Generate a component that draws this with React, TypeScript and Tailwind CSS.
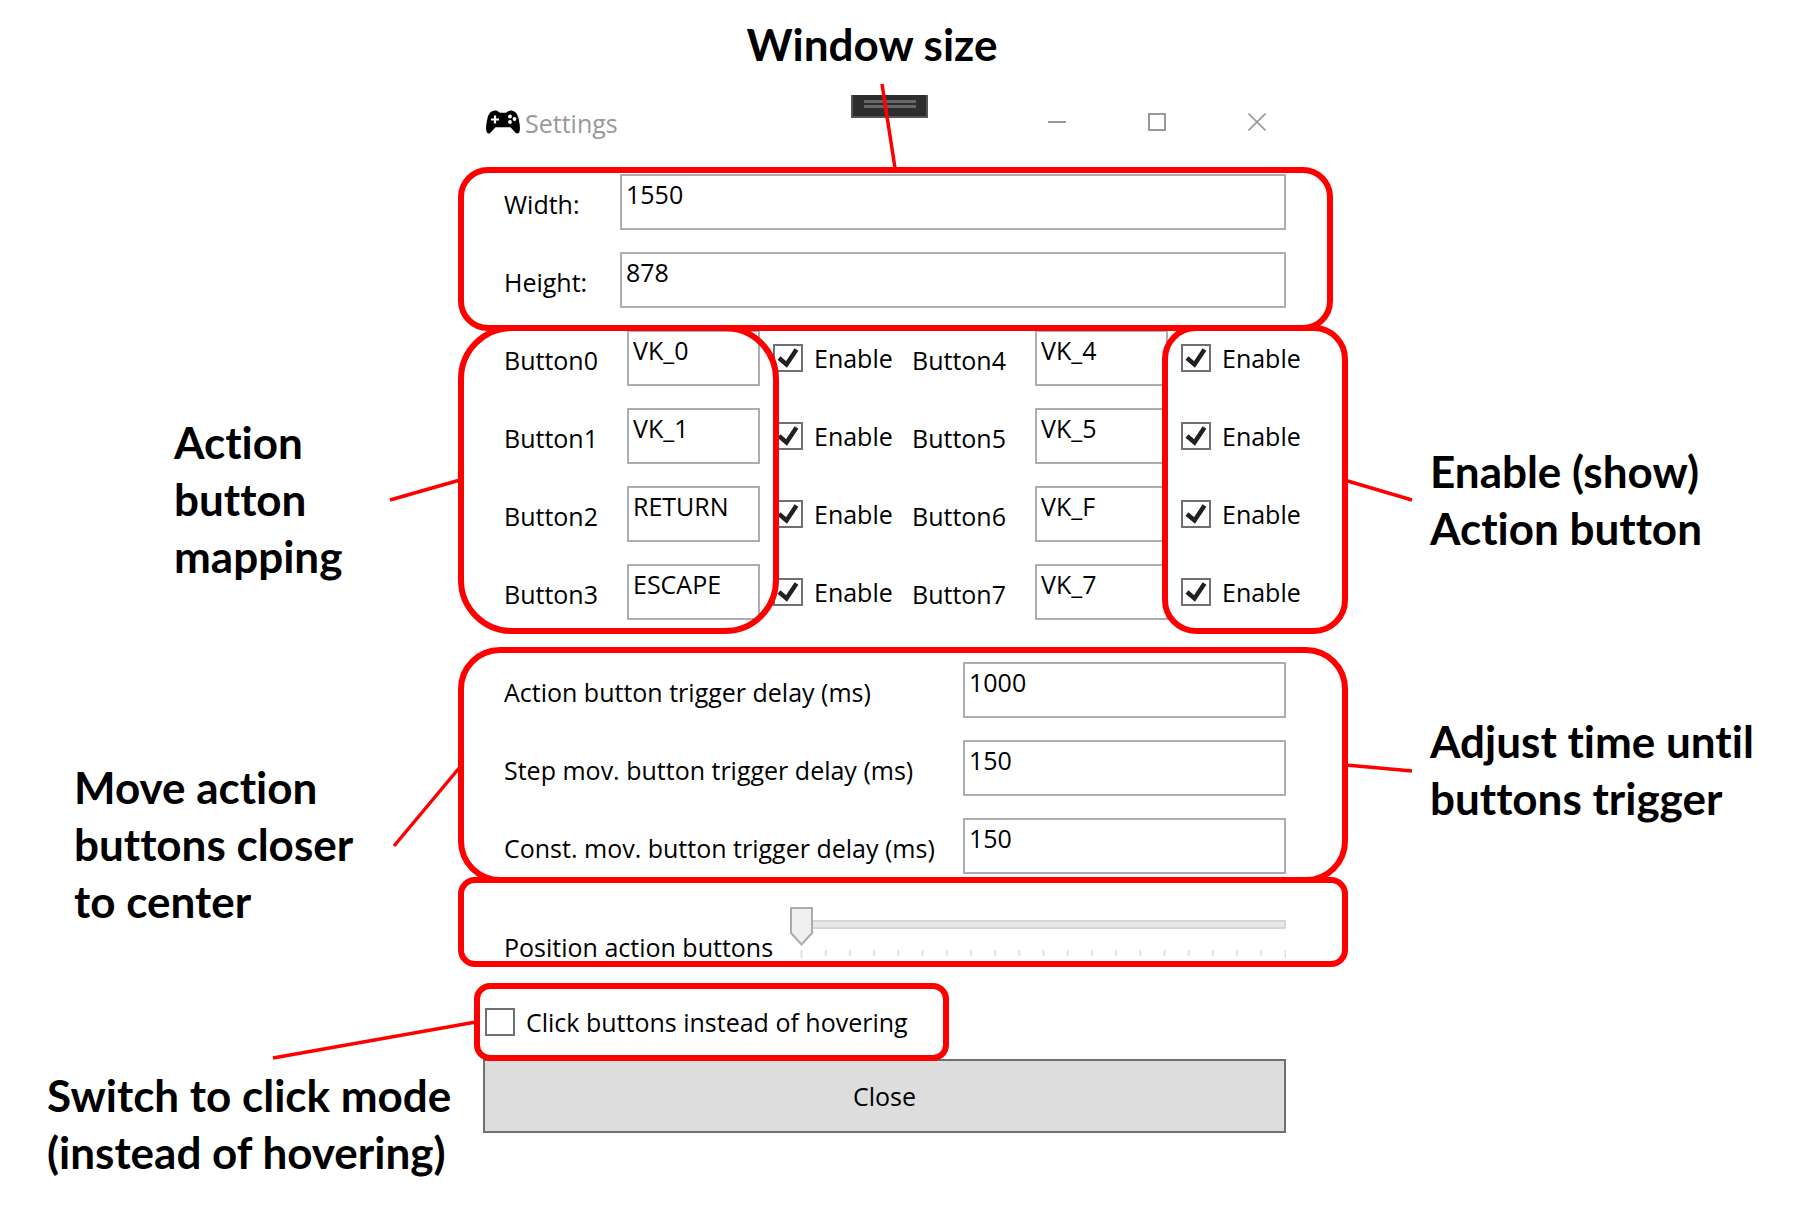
import { useState, type ReactNode } from "react";

const leftKeys = [
  { name: "Button0", value: "VK_0" },
  { name: "Button1", value: "VK_1" },
  { name: "Button2", value: "RETURN" },
  { name: "Button3", value: "ESCAPE" },
];
const rightKeys = [
  { name: "Button4", value: "VK_4" },
  { name: "Button5", value: "VK_5" },
  { name: "Button6", value: "VK_F" },
  { name: "Button7", value: "VK_7" },
];
const delays = [
  { id: "delay-action", label: "Action button trigger delay (ms)", value: "1000" },
  { id: "delay-step", label: "Step mov. button trigger delay (ms)", value: "150" },
  { id: "delay-const", label: "Const. mov. button trigger delay (ms)", value: "150" },
];

function Note({ children, className = "" }: { children: ReactNode; className?: string }) {
  return (
    <p
      className={`font-['Lato',sans-serif] text-[44px] leading-[57px] font-bold whitespace-nowrap [font-variant-ligatures:none] ${className}`}
    >
      {children}
    </p>
  );
}

function TextField({ id, value, className = "" }: { id: string; value: string; className?: string }) {
  return (
    <input
      id={id}
      type="text"
      defaultValue={value}
      className={`h-14 min-w-0 border-2 border-[#abadb3] bg-white pr-1 pb-4 pl-1 outline-none ${className}`}
    />
  );
}

function CheckBox({ label, checked = false }: { label: string; checked?: boolean }) {
  return (
    <label className="flex items-center gap-[11px] whitespace-nowrap">
      <span className="relative h-7 w-[30px] shrink-0">
        <input
          type="checkbox"
          defaultChecked={checked}
          className="peer block h-full w-full appearance-none border-2 border-[#707070] bg-white"
        />
        <svg
          viewBox="0 0 30 28"
          className="pointer-events-none absolute inset-0 hidden h-full w-full peer-checked:block"
          fill="none"
          stroke="#212121"
          strokeWidth="4.5"
        >
          <path d="M6 14 L13.5 20.5 L23.500 5.500" />
        </svg>
      </span>
      {label}
    </label>
  );
}

function KeyColumn({ keys }: { keys: { name: string; value: string }[] }) {
  return (
    <div className="flex w-[408px] flex-col gap-[22px]">
      {keys.map((k) => (
        <div key={k.name} className="flex items-center">
          <label htmlFor={k.name} className="w-[123px] pt-1">
            {k.name}
          </label>
          <TextField id={k.name} value={k.value} className="mr-[13px] w-[133px]" />
          <CheckBox label="Enable" checked />
        </div>
      ))}
    </div>
  );
}

function PositionSlider() {
  const [value, setValue] = useState(0);
  const x = 11.5 + value * 24.2;
  return (
    <div className="relative h-[57px] w-[496px]">
      <svg viewBox="0 0 496 52" className="block h-[52px] w-full">
        <rect x="11" y="15" width="484" height="7" fill="#e7eaea" stroke="#d6d6d6" strokeWidth="2" />
        {Array.from({ length: 21 }, (_, i) => (
          <rect key={i} x={10.5 + i * 24.2} y="44" width="2" height={i % 20 === 0 ? 8 : 6} fill="#e0e2e2" />
        ))}
        <path
          d={`M${x - 10.5} 2 H${x + 10.5} V27 L${x} 38.5 L${x - 10.5} 27 Z`}
          fill="#f0f0f0"
          stroke="#acacac"
          strokeWidth="2"
        />
      </svg>
      <input
        id="position"
        type="range"
        min={0}
        max={20}
        value={value}
        onChange={(e) => setValue(Number(e.target.value))}
        className="absolute inset-0 h-full w-full opacity-0"
      />
    </div>
  );
}

function Gamepad() {
  return (
    <svg viewBox="0 0 36 24" className="h-6 w-9 shrink-0" aria-hidden="true">
      <path
        d="M8 1 C10.5 0 12.5 .8 14 2.2 C15 3 21 3 22 2.2 C23.500 .8 25.500 0 28 1 C31.500 2 32.800 5 33.700 9 C34.800 14 35.400 18 34.500 21.500 C33.900 23.800 31.800 24 30.300 22.600 L25.500 17.200 H10.500 L5.700 22.600 C4.200 24 2.100 23.800 1.500 21.500 C.6 18 1.200 14 2.300 9 C3.200 5 4.500 2 8 1 Z"
        fill="#000"
      />
      <path d="M10 5.500 V13.500 M6 9.500 H14" stroke="#fff" strokeWidth="2.200" />
      <g fill="#fff">
        <circle cx="25" cy="6.500" r="1.900" />
        <circle cx="25" cy="12" r="1.900" />
        <circle cx="29.500" cy="9" r="1.900" />
      </g>
    </svg>
  );
}

function TitleBar() {
  return (
    <header className="mt-[22px] grid h-[79px] grid-cols-[366px_1fr_300px] pr-[41px] pl-[27px]">
      <div className="flex h-[54px] items-center gap-1 text-[#999999]">
        <Gamepad />
        <h1 className="pt-[2px]">Settings</h1>
      </div>
      <div className="flex h-[23px] w-[77px] flex-col items-center gap-[2px] border-2 border-t-0 border-[#555555] bg-[#2d2d30] pt-[5px]">
        <span className="h-[3px] w-[52px] bg-[#666666]" />
        <span className="h-[3px] w-[52px] bg-[#666666]" />
      </div>
      <div className="grid h-[54px] grid-cols-3">
        <button type="button" aria-label="Minimize" className="flex items-center justify-center">
          <svg viewBox="0 0 18 18" className="size-[18px]" stroke="#999" strokeWidth="2">
            <path d="M0 9 H18" />
          </svg>
        </button>
        <button type="button" aria-label="Maximize" className="flex items-center justify-center">
          <svg viewBox="0 0 18 18" className="size-[18px]" stroke="#999" strokeWidth="2" fill="none">
            <rect x="1" y="1" width="16" height="16" />
          </svg>
        </button>
        <button type="button" aria-label="Close window" className="flex items-center justify-center">
          <svg viewBox="0 0 18 18" className="size-[18px]" stroke="#999" strokeWidth="1.600">
            <path d="M.5 .5 L17.500 17.500 M17.500 .5 L.5 17.500" />
          </svg>
        </button>
      </div>
    </header>
  );
}

const frame = "pointer-events-none absolute border-[6px] border-[#ff0000]";

function Highlights() {
  return (
    <div aria-hidden="true">
      <div className={`${frame} top-[167px] left-0 h-[164px] w-[875px] rounded-[30px]`} />
      <div className={`${frame} top-[325px] left-0 h-[309px] w-[321px] rounded-[54px]`} />
      <div className={`${frame} top-[325px] left-[704px] h-[309px] w-[186px] rounded-[34px]`} />
      <div className={`${frame} top-[647px] left-0 h-[236px] w-[890px] rounded-[42px]`} />
      <div className={`${frame} top-[877px] left-0 h-[90px] w-[890px] rounded-[17px]`} />
      <div className={`${frame} top-[983px] left-4 h-[78px] w-[475px] rounded-[16px]`} />
      <svg
        className="pointer-events-none absolute top-0 left-0 h-full w-full overflow-visible"
        stroke="#ff0000"
        strokeWidth="3.500"
      >
        <path d="M424 84 L437 168" />
        <path d="M-68 500 L2 480" />
        <path d="M-64 846 L2 767" />
        <path d="M-185 1058 L18 1022" />
        <path d="M954 500 L888 480.500" />
        <path d="M954 771 L888 765" />
      </svg>
    </div>
  );
}

export default function App() {
  return (
    <main className="grid min-h-screen grid-cols-[458fr_890px_449fr] bg-white text-black">
      <aside className="flex flex-col pt-[414px]">
        <Note className="pl-[174px]">
          Action
          <br />
          button
          <br />
          mapping
        </Note>
        <Note className="mt-[174px] pl-[74px]">
          Move action
          <br />
          buttons closer
          <br />
          to center
        </Note>
        <Note className="mt-[137px] pl-[47px]">
          Switch to click mode
          <br />
          (instead of hovering)
        </Note>
      </aside>

      <section className="relative pt-4 font-['Open_Sans',sans-serif] text-[25px] leading-8">
        <Note className="pr-[62px] text-center">Window size</Note>
        <TitleBar />

        <form className="pb-16" onSubmit={(e) => e.preventDefault()}>
          <div className="flex flex-col gap-[22px] pr-[62px] pl-[46px]">
            <div className="flex items-center">
              <label htmlFor="width" className="w-[116px] pt-1">
                Width:
              </label>
              <TextField id="width" value="1550" className="flex-1" />
            </div>
            <div className="flex items-center">
              <label htmlFor="height" className="w-[116px] pt-1">
                Height:
              </label>
              <TextField id="height" value="878" className="flex-1" />
            </div>
          </div>

          <div className="mt-[22px] flex pl-[46px]">
            <KeyColumn keys={leftKeys} />
            <KeyColumn keys={rightKeys} />
          </div>

          <div className="mt-[42px] flex flex-col gap-[22px] pr-[62px] pl-[46px]">
            {delays.map((d) => (
              <div key={d.id} className="flex items-center justify-between">
                <label htmlFor={d.id} className="pt-1 whitespace-nowrap">
                  {d.label}
                </label>
                <TextField id={d.id} value={d.value} className="w-[323px]" />
              </div>
            ))}
          </div>

          <div className="mt-8 flex items-end justify-between pr-[62px] pl-[46px]">
            <label htmlFor="position" className="whitespace-nowrap">
              Position action buttons
            </label>
            <PositionSlider />
          </div>

          <div className="mt-[43px] flex pl-[27px]">
            <CheckBox label="Click buttons instead of hovering" />
          </div>

          <div className="mt-[21px] pr-[62px] pl-[25px]">
            <button type="button" className="h-[74px] w-full border-2 border-[#707070] bg-[#dddddd]">
              Close
            </button>
          </div>
        </form>

        <Highlights />
      </section>

      <aside className="flex flex-col pt-[443px] pl-[82px]">
        <Note>
          Enable (show)
          <br />
          Action button
        </Note>
        <Note className="mt-[156px]">
          Adjust time until
          <br />
          buttons trigger
        </Note>
      </aside>
    </main>
  );
}
